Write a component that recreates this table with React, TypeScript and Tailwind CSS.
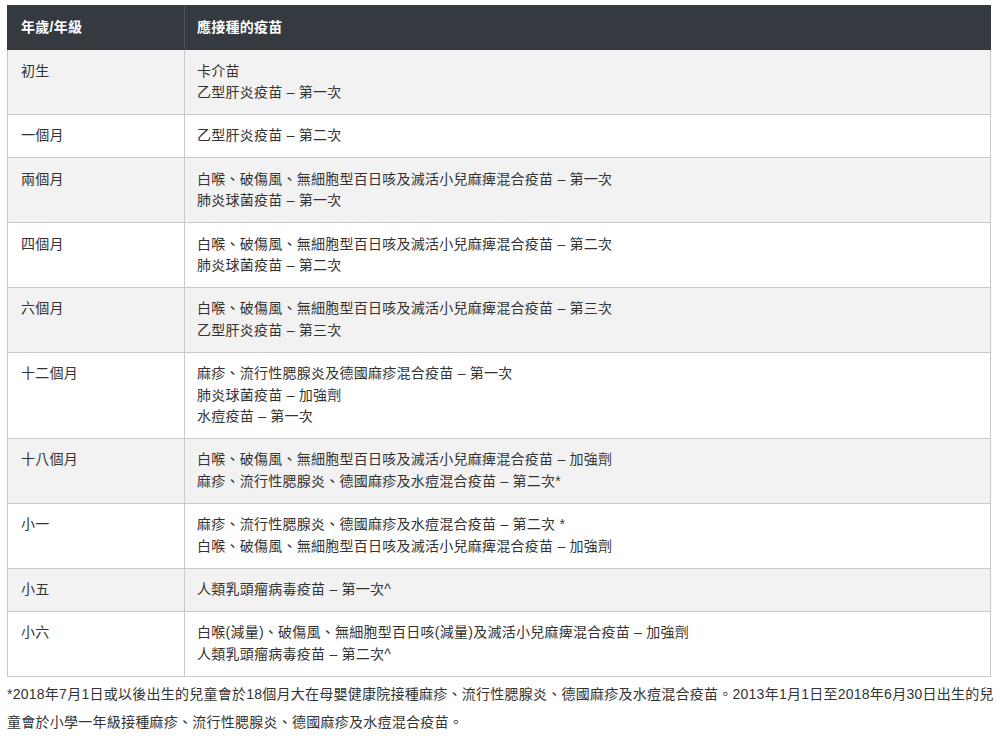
const rows: { age: string; vaccines: string[] }[] = [
  { age: "初生", vaccines: ["卡介苗", "乙型肝炎疫苗 – 第一次"] },
  { age: "一個月", vaccines: ["乙型肝炎疫苗 – 第二次"] },
  {
    age: "兩個月",
    vaccines: ["白喉、破傷風、無細胞型百日咳及滅活小兒麻痺混合疫苗 – 第一次", "肺炎球菌疫苗 – 第一次"],
  },
  {
    age: "四個月",
    vaccines: ["白喉、破傷風、無細胞型百日咳及滅活小兒麻痺混合疫苗 – 第二次", "肺炎球菌疫苗 – 第二次"],
  },
  {
    age: "六個月",
    vaccines: ["白喉、破傷風、無細胞型百日咳及滅活小兒麻痺混合疫苗 – 第三次", "乙型肝炎疫苗 – 第三次"],
  },
  {
    age: "十二個月",
    vaccines: ["麻疹、流行性腮腺炎及德國麻疹混合疫苗 – 第一次", "肺炎球菌疫苗 – 加強劑", "水痘疫苗 – 第一次"],
  },
  {
    age: "十八個月",
    vaccines: ["白喉、破傷風、無細胞型百日咳及滅活小兒麻痺混合疫苗 – 加強劑", "麻疹、流行性腮腺炎、德國麻疹及水痘混合疫苗 – 第二次*"],
  },
  {
    age: "小一",
    vaccines: ["麻疹、流行性腮腺炎、德國麻疹及水痘混合疫苗 – 第二次 *", "白喉、破傷風、無細胞型百日咳及滅活小兒麻痺混合疫苗 – 加強劑"],
  },
  { age: "小五", vaccines: ["人類乳頭瘤病毒疫苗 – 第一次^"] },
  {
    age: "小六",
    vaccines: ["白喉(減量)、破傷風、無細胞型百日咳(減量)及滅活小兒麻痺混合疫苗 – 加強劑", "人類乳頭瘤病毒疫苗 – 第二次^"],
  },
];

export default function App() {
  return (
    <div
      className="min-h-screen bg-white pl-[7px] pt-[5px] text-[14px] tracking-[0.25px] text-[#333333]"
      style={{ fontFamily: '"Liberation Sans", "Noto Sans CJK TC", sans-serif' }}
    >
      <table className="w-[984px] border-collapse table-fixed">
        <colgroup>
          <col className="w-[177px]" />
          <col />
        </colgroup>
        <thead>
          <tr className="bg-[#343a40] text-white">
            <th className="h-[44px] border border-[#343a40] border-r-[#4b5157] px-[13px] text-left font-bold leading-[21px]">
              年歲/年級
            </th>
            <th className="h-[44px] border border-[#343a40] px-[12px] text-left font-bold leading-[21px]">
              應接種的疫苗
            </th>
          </tr>
        </thead>
        <tbody>
          {rows.map((r, i) => (
            <tr key={r.age} className={i % 2 === 0 ? "bg-[#f2f2f2]" : "bg-white"}>
              <td className="border border-[#c9c9c9] px-[13px] py-[10.5px] align-top leading-[21.4px]">
                {r.age}
              </td>
              <td className="border border-[#c9c9c9] px-[12px] py-[10.5px] align-top leading-[21.4px]">
                {r.vaccines.map((v) => (
                  <div key={v}>{v}</div>
                ))}
              </td>
            </tr>
          ))}
        </tbody>
      </table>
      <p className="mt-[3px] w-[990px] leading-[28.5px]">
        *2018年7月1日或以後出生的兒童會於18個月大在母嬰健康院接種麻疹、流行性腮腺炎、德國麻疹及水痘混合疫苗。2013年1月1日至2018年6月30日出生的兒童會於小學一年級接種麻疹、流行性腮腺炎、德國麻疹及水痘混合疫苗。
      </p>
    </div>
  );
}
